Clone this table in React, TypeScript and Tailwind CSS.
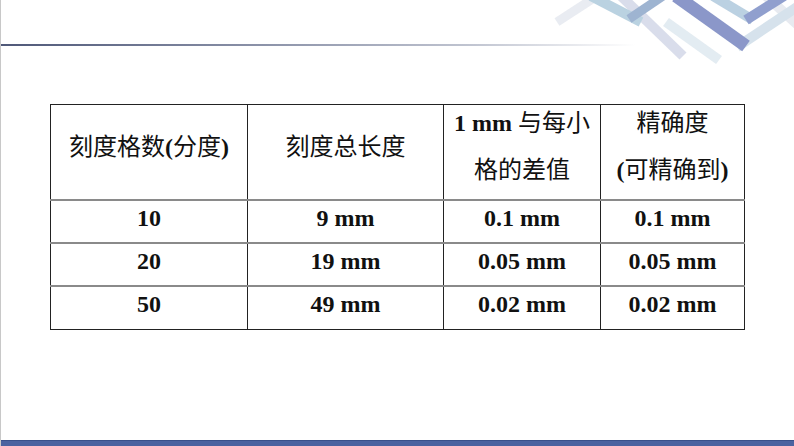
const FONT = "font-['Liberation_Serif','Noto_Sans_CJK_SC',serif]";

const rows = [
  ['10', '9 mm', '0.1 mm', '0.1 mm'],
  ['20', '19 mm', '0.05 mm', '0.05 mm'],
  ['50', '49 mm', '0.02 mm', '0.02 mm'],
];

function Decoration() {
  return (
    <svg
      className="pointer-events-none absolute left-0 top-0"
      width="794"
      height="70"
      viewBox="0 0 794 70"
    >
      <g strokeLinecap="butt" fill="none" opacity="0.85">
        <line x1="556" y1="22" x2="596" y2="-4" stroke="#e6e9f0" strokeWidth="9" />
        <line x1="665" y1="22" x2="718" y2="60" stroke="#dfe9f0" strokeWidth="10" />
        <line x1="620" y1="-4" x2="682" y2="56" stroke="#d3d8e8" strokeWidth="10" />
        <line x1="590" y1="-4" x2="640" y2="22" stroke="#afcbdc" strokeWidth="10" />
        <line x1="628" y1="19" x2="662" y2="-4" stroke="#8ea7ca" strokeWidth="9" />
        <line x1="765" y1="-4" x2="800" y2="28" stroke="#e3e7ee" strokeWidth="10" />
        <line x1="736" y1="47" x2="802" y2="3" stroke="#cfdee9" strokeWidth="10" />
        <line x1="675" y1="-4" x2="745" y2="46" stroke="#7786c0" strokeWidth="13" />
        <line x1="712" y1="-4" x2="752" y2="20" stroke="#b0c9dd" strokeWidth="10" />
        <line x1="745" y1="20" x2="783" y2="-4" stroke="#7d8fc6" strokeWidth="10" />
      </g>
    </svg>
  );
}

export default function App() {
  const cell = 'border border-[#222] text-center align-middle p-0';
  return (
    <div className={`relative flex h-[446px] w-[794px] flex-col overflow-hidden border-l border-[#c8c8c8] bg-white text-[#111] ${FONT}`}>
      <Decoration />
      <div className="h-[44px] shrink-0" />
      <div className="h-[2px] w-full shrink-0 bg-gradient-to-r from-[#4f5878] via-[#c2c6d2] via-60% to-transparent to-80%" />
      <div className="ml-[49px] mt-[58px]">
        <table className="w-[694px] table-fixed border-collapse text-[24px]">
          <colgroup>
            <col className="w-[197px]" />
            <col className="w-[196px]" />
            <col className="w-[157px]" />
            <col className="w-[144px]" />
          </colgroup>
          <thead>
            <tr className="h-[95px]">
              <th className={`${cell} font-normal`}>
                <div className="-translate-y-[5px] leading-[47px]">
                  刻度格数<b>(</b>分度<b>)</b>
                </div>
              </th>
              <th className={`${cell} font-normal`}>
                <div className="-translate-y-[5px] leading-[47px]">刻度总长度</div>
              </th>
              <th className={`${cell} font-normal`}>
                <div className="-translate-y-[5px] leading-[47px]">
                  <b>1 mm </b>与每小
                  <br />
                  格的差值
                </div>
              </th>
              <th className={`${cell} font-normal`}>
                <div className="-translate-y-[5px] leading-[47px]">
                  精确度
                  <br />
                  <b>(</b>可精确到<b>)</b>
                </div>
              </th>
            </tr>
          </thead>
          <tbody>
            {rows.map((r) => (
              <tr key={r[0]} className="h-[43px] border-t-2 border-[#8a8a8a]">
                {r.map((v, i) => (
                  <td key={i} className={`${cell} font-bold`}>
                    <div className="-translate-y-[4px] leading-[30px]">{v}</div>
                  </td>
                ))}
              </tr>
            ))}
          </tbody>
        </table>
      </div>
      <div className="flex-1" />
      <div className="h-[6px] w-full shrink-0 border-t border-[#39508a] bg-[#4a62a0]" />
    </div>
  );
}
